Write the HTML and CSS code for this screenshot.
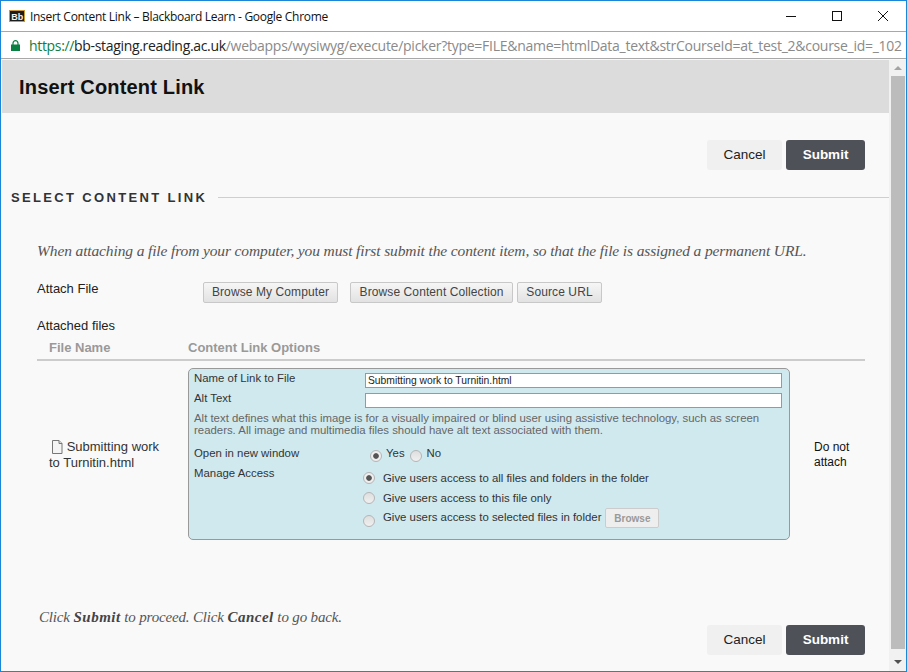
FILE: index.html
```html
<!DOCTYPE html>
<html lang="en">
<head>
<meta charset="utf-8">
<title>Insert Content Link – Blackboard Learn</title>
<link rel="stylesheet" href="styles.css">
</head>
<body>
<div class="window">
  <div class="titlebar">
    <svg class="favicon" width="16" height="12" viewBox="0 0 16 12"><rect x="0.5" y="0.5" width="15" height="11" fill="#1c1c1c" stroke="#c99a3a"/><text x="2.2" y="9.5" class="favtext">Bb</text></svg>
    <span class="wintitle">Insert Content Link – Blackboard Learn - Google Chrome</span>
    <div class="winctl">
      <svg width="12" height="12" viewBox="0 0 12 12"><path d="M1 6.5H11" stroke="#111" fill="none"/></svg>
      <svg width="12" height="12" viewBox="0 0 12 12"><rect x="1.5" y="1.5" width="9" height="9" stroke="#111" fill="none"/></svg>
      <svg width="12" height="12" viewBox="0 0 12 12"><path d="M1 1L11 11M11 1L1 11" stroke="#111" fill="none"/></svg>
    </div>
  </div>
  <div class="urlbar">
    <svg class="lock" width="9" height="11" viewBox="0 0 9 11"><path d="M2 5V3.2a2.5 2.5 0 0 1 5 0V5" fill="none" stroke="#0b8043" stroke-width="1.2"/><rect y="4.5" width="9" height="6.5" fill="#0b8043"/></svg>
    <span class="url"><span class="scheme">https://</span><span class="host">bb-staging.reading.ac.uk</span>/webapps/wysiwyg/execute/picker?type=FILE&amp;name=htmlData_text&amp;strCourseId=at_test_2&amp;course_id=_102</span>
  </div>
  <div class="viewport">
    <main class="page">
      <header class="pagehead"><h1>Insert Content Link</h1></header>
      <div class="actions actions-top">
        <button class="btn btn-cancel">Cancel</button>
        <button class="btn btn-submit">Submit</button>
      </div>
      <div class="sectionhead"><h2>SELECT CONTENT LINK</h2><span class="rule"></span></div>
      <div class="body">
        <p class="instr">When attaching a file from your computer, you must first submit the content item, so that the file is assigned a permanent URL.</p>
        <div class="attach">
          <span class="attach-label">Attach File</span>
          <div class="attach-btns">
            <button class="gbtn gbtn-first">Browse My Computer</button>
            <button class="gbtn gbtn-second">Browse Content Collection</button>
            <button class="gbtn gbtn-third">Source URL</button>
          </div>
        </div>
        <div class="attached">Attached files</div>
        <div class="thead"><span class="th-name">File Name</span><span>Content Link Options</span></div>
        <div class="trow">
          <div class="filecell">
            <svg class="fileicon" width="12" height="14" viewBox="0 0 12 14"><path d="M1.5 0.5H8L11 3.5V13.5H1.5Z" fill="#f4f4f4" stroke="#777"/><path d="M8 0.5V3.5H11" fill="#ddd" stroke="#777"/></svg>
            <span>Submitting work to Turnitin.html</span>
          </div>
          <div class="panel">
            <div class="frow frow-name"><label class="flabel">Name of Link to File</label><input class="tinput" type="text" value="Submitting work to Turnitin.html"></div>
            <div class="frow frow-alt"><label class="flabel">Alt Text</label><input class="tinput" type="text"></div>
            <p class="hint">Alt text defines what this image is for a visually impaired or blind user using assistive technology, such as screen readers. All image and multimedia files should have alt text associated with them.</p>
            <div class="frow frow-open"><span class="flabel">Open in new window</span>
              <div class="yesno"><span class="radio on"></span><span class="yes">Yes</span><span class="radio"></span><span>No</span></div>
            </div>
            <div class="frow frow-access"><span class="flabel">Manage Access</span>
              <div class="access">
                <div class="opt opt1"><span class="radio on"></span><span>Give users access to all files and folders in the folder</span></div>
                <div class="opt opt2"><span class="radio"></span><span>Give users access to this file only</span></div>
                <div class="opt opt3"><span class="radio"></span><span class="opt3-text">Give users access to selected files in folder</span><button class="sbtn">Browse</button></div>
              </div>
            </div>
          </div>
          <div class="actcell">Do not attach</div>
        </div>
        <p class="foot">Click <b>Submit</b> to proceed. Click <b>Cancel</b> to go back.</p>
      </div>
      <div class="actions actions-bottom">
        <button class="btn btn-cancel">Cancel</button>
        <button class="btn btn-submit">Submit</button>
      </div>
    </main>
    <div class="scrollbar">
      <span class="arrow up"></span>
      <span class="thumb"></span>
      <span class="arrow down"></span>
    </div>
  </div>
</div>
</body>
</html>
```

FILE: styles.css
```css
* { box-sizing: border-box; }
html, body { margin: 0; padding: 0; }
body { width: 907px; height: 672px; overflow: hidden; font-family: "Liberation Sans", Arial, sans-serif; color: #222; }
.window { width: 907px; height: 672px; border: 1px solid #1a86d8; display: flex; flex-direction: column; background: #fff; }
.titlebar { height: 31px; display: flex; align-items: center; padding-left: 8px; border-bottom: 1px solid #a8a8a8; flex: none; }
.favicon { flex: none; margin-right: 5px; }
.favtext { font: bold 9px "Liberation Sans", sans-serif; fill: #f2f2f2; }
.wintitle { font: 12px "Open Sans", sans-serif; color: #111; white-space: nowrap; letter-spacing: -0.3px; }
.winctl { margin-left: auto; display: flex; gap: 34px; padding-right: 17px; }
.winctl svg { display: block; }
.urlbar { height: 27px; display: flex; align-items: center; padding-left: 10px; border-bottom: 1px solid #a8a8a8; flex: none; }
.lock { flex: none; margin-right: 9px; }
.url { font: 14px "Open Sans", sans-serif; letter-spacing: -0.27px; color: #8a8a8a; white-space: nowrap; }
.scheme { color: #0b8043; letter-spacing: -0.33px; }
.host { color: #222; letter-spacing: -0.33px; }
.viewport { flex: 1; min-height: 0; display: flex; background: #f9f9f9; padding-top: 1px; }
.page { width: 888px; flex: none; padding-left: 1px; display: flex; flex-direction: column; }
.pagehead { height: 53px; flex: none; background: #dcdcdc; padding: 1px 0 0 17px; display: flex; align-items: center; }
h1 { margin: 0; font-size: 20px; font-weight: bold; color: #111; letter-spacing: 0.18px; }
.actions { display: flex; flex: none; justify-content: flex-end; gap: 4px; padding-right: 24px; }
.actions-top { margin-top: 27px; }
.actions-bottom { margin-top: auto; margin-bottom: 16px; }
.btn { height: 30px; border: 0; border-radius: 3px; font-family: inherit; font-size: 13.5px; padding: 0 0 2px; }
.btn-cancel { width: 75px; background: #f0f0f0; color: #222; }
.btn-submit { width: 79px; background: #4f5159; color: #fff; font-weight: bold; }
.sectionhead { display: flex; flex: none; align-items: center; margin-top: 19px; padding-left: 9px; height: 16px; }
h2 { margin: 0; font-size: 13px; font-weight: bold; color: #333; letter-spacing: 2.34px; white-space: nowrap; }
.rule { flex: 1; height: 1px; background: #cfcfcf; margin-left: 11px; }
.body { padding: 0 24px 0 35px; flex: none; }
.instr { margin: 36px 0 0; font: italic 15.5px/19px "Liberation Serif", serif; color: #555; white-space: nowrap; letter-spacing: -0.13px; }
.attach { display: flex; margin-top: 22px; }
.attach-label { width: 166px; font-size: 13px; line-height: 14px; flex: none; }
.attach-btns { display: flex; }
.gbtn { height: 21px; border: 1px solid #c8c8c8; border-radius: 2px; background: linear-gradient(#f6f6f6, #e2e2e2); font-family: inherit; font-size: 12px; letter-spacing: 0.1px; color: #444; padding: 0 0 2px; margin-left: 4px; white-space: nowrap; }
.gbtn-first { width: 135px; margin-left: 0; margin-right: 8px; }
.gbtn-second { width: 163px; margin-left: 4px; }
.gbtn-third { width: 85px; }
.attached { font-size: 13px; line-height: 14px; margin-top: 16px; }
.thead { display: flex; font-size: 13px; font-weight: bold; color: #999; height: 28px; padding-top: 7px; border-bottom: 2px solid #ccc; }
.th-name { width: 151px; padding-left: 12px; flex: none; }
.trow { display: flex; align-items: center; margin-top: 7px; }
.filecell { width: 151px; flex: none; font-size: 13px; line-height: 16px; padding: 2px 20px 0 12px; color: #333; }
.fileicon { vertical-align: -3px; margin: 0 0 0 2px; }
.panel { width: 602px; height: 172px; flex: none; background: #d0e9ef; border: 1px solid #999; border-radius: 5px; padding: 2px 7px 0 5px; font-size: 11.4px; color: #333; }
.frow { display: flex; }
.flabel { width: 171px; flex: none; line-height: 14px; }
.frow-alt { margin-top: 3px; }
.tinput { width: 417px; height: 15px; border: 1px solid #999; background: #fff; padding: 0 2px; font: 10.3px "Liberation Sans", sans-serif; color: #222; margin: 2px 0 0; border-radius: 0; }
.hint { margin: 4px 0 0; line-height: 12px; color: #666; width: 580px; }
.frow-open { margin-top: 10px; }
.yesno { display: flex; align-items: flex-start; padding-left: 5px; line-height: 14px; }
.yes { margin-right: 5px; margin-left: 4px; }
.yesno .radio { margin-top: 4px; }
.yesno .radio + span:last-child { margin-left: 5px; }
.frow-access { margin-top: 4px; }
.access { display: flex; flex-direction: column; margin-left: -2px; padding-top: 4px; }
.opt { display: flex; align-items: center; line-height: 14px; }
.opt .radio { margin-right: 8px; }
.opt1 { height: 16px; }
.opt2 { height: 23px; }
.opt3 { height: 17px; }
.opt3 .radio { margin-top: 6px; }
.opt3-text { margin-top: -2px; }
.radio { width: 12px; height: 12px; flex: none; border-radius: 50%; border: 1px solid #b5b5b5; background: linear-gradient(#dedede, #f0f0f0); display: inline-block; }
.radio.on { background: radial-gradient(circle, #555 0, #555 2.4px, #eee 3.2px); }
.sbtn { height: 20px; width: 54px; margin-left: 4px; margin-top: 1px; border: 1px solid #ccc; border-radius: 2px; background: #eee; color: #999; font: bold 10px "Liberation Sans", sans-serif; padding: 0; }
.actcell { width: 60px; margin-left: 24px; padding-top: 2px; font-size: 12px; line-height: 15px; color: #111; }
.foot { margin: 69px 0 0 2px; font: italic 15px/16px "Liberation Serif", serif; letter-spacing: -0.16px; color: #555; white-space: nowrap; }
.foot b { color: #444; letter-spacing: 0.5px; }
.scrollbar { width: 17px; flex: none; background: #f1f1f1; display: flex; flex-direction: column; align-items: center; }
.arrow { width: 0; height: 0; border-left: 4px solid transparent; border-right: 4px solid transparent; flex: none; }
.arrow.up { border-bottom: 4px solid #a3a3a3; margin: 6px 0 6px; }
.arrow.down { border-top: 4px solid #505050; margin: 11px 0 7px; }
.thumb { width: 14px; flex: 1; background: #bcbcbc; margin-left: 1px; }
```
